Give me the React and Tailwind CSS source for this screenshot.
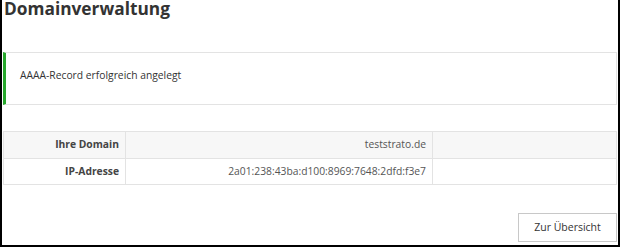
export default function App() {
  return (
    <div className="w-[620px] h-[247px] bg-white overflow-hidden" style={{ fontFamily: '"Open Sans", sans-serif' }}>
      <div className="h-full border-l-2 border-r-2 border-b-2 border-black pl-[1px] pr-[1px] flex flex-col">
        <h1 className="text-[17.3px] leading-[18px] font-bold text-[#333] pl-[1px]">Domainverwaltung</h1>

        <div className="mt-[34px] h-[53px] border border-[#e3e3e3] border-l-[3px] border-l-[#27a82c] flex items-center pl-[14px] pb-[6px] text-[10.3px] text-[#333]">
          AAAA-Record erfolgreich angelegt
        </div>

        <table className="mt-[26px] w-full border-collapse text-[10.3px] text-[#555]">
          <tbody>
            <tr className="bg-[#f7f7f7] h-[27px]">
              <td className="w-[122px] border border-[#e3e3e3] text-right pr-[6px] font-bold text-[#444]">Ihre Domain</td>
              <td className="w-[307px] border border-[#e3e3e3] text-right pr-[6px]">teststrato.de</td>
              <td className="border border-[#e3e3e3]"></td>
            </tr>
            <tr className="h-[26px]">
              <td className="border border-[#e3e3e3] text-right pr-[6px] font-bold text-[#444]">IP-Adresse</td>
              <td className="border border-[#e3e3e3] text-right pr-[6px]">2a01:238:43ba:d100:8969:7648:2dfd:f3e7</td>
              <td className="border border-[#e3e3e3]"></td>
            </tr>
          </tbody>
        </table>

        <div className="mt-auto mb-[3px] flex justify-end">
          <button className="w-[99px] h-[29px] border border-[#c8c8c8] bg-white text-[10.5px] text-[#333]">Zur Übersicht</button>
        </div>
      </div>
    </div>
  );
}
